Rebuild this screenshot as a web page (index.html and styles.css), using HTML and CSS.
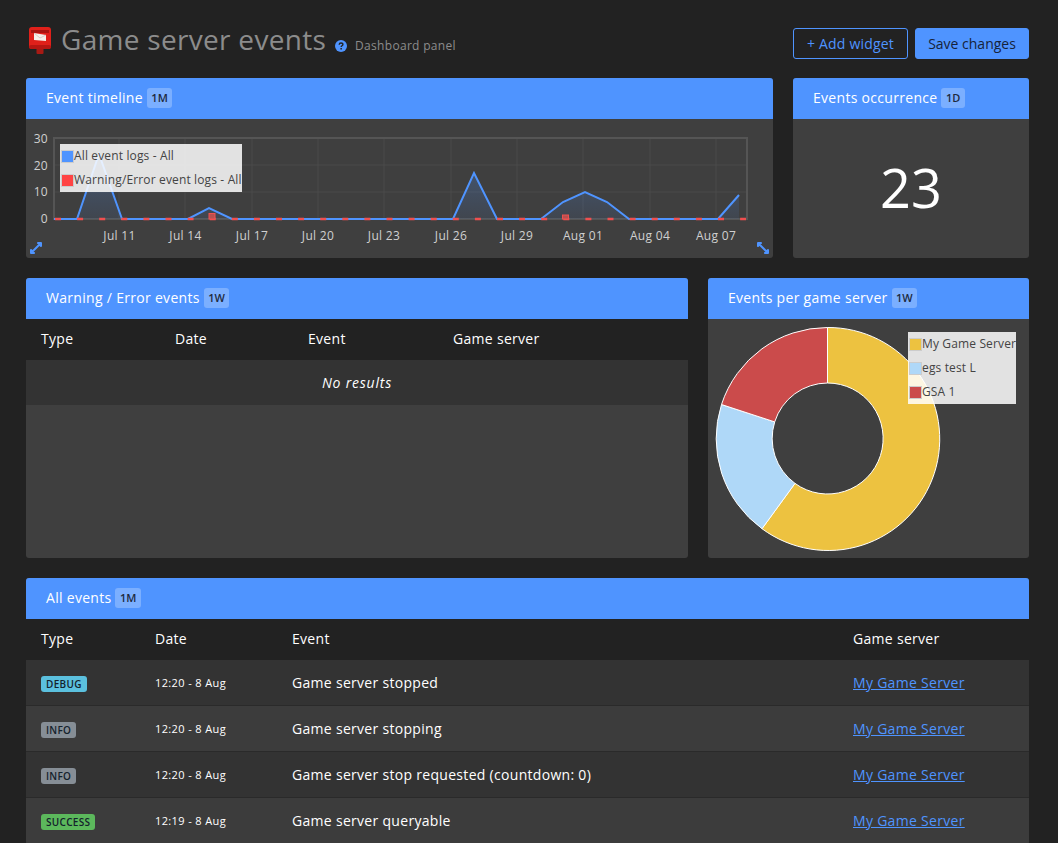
FILE: index.html
```html
<!DOCTYPE html>
<html lang="en">
<head>
    <meta charset="UTF-8">
    <meta name="viewport" content="width=device-width, initial-scale=1.0">
    <title>Game server events</title>
    <link rel="stylesheet" href="styles.css">
</head>
<body>

<div class="page-head">
    <svg class="logo" viewBox="0 0 24 27" width="24" height="27">
        <rect x="8.5" y="21" width="7" height="6" rx="1" fill="#a81a14"/>
        <rect x="1" y="0" width="22" height="22" rx="3" fill="#e0201a"/>
        <rect x="3" y="3" width="18" height="3" fill="#a91510"/>
        <path d="M6 6 L18 8 L18 14 L6 13 Z" fill="#f6f0ea"/>
        <path d="M6 6 L12 11 L18 8" fill="none" stroke="#c9bdb6" stroke-width="0.7"/>
        <rect x="1" y="18" width="22" height="4" rx="2" fill="#b81612"/>
    </svg>
    <h1>Game server events</h1>
    <svg class="help" viewBox="0 0 12 12" width="12" height="12">
        <circle cx="6" cy="6" r="6" fill="#4f94ff"/>
        <path d="M4.2 4.7 C4.2 3.6 5 3 6 3 C7 3 7.9 3.6 7.9 4.6 C7.9 5.8 6.2 5.8 6.2 7" fill="none" stroke="#222" stroke-width="1.4"/>
        <rect x="5.4" y="8" width="1.5" height="1.5" fill="#222"/>
    </svg>
    <span class="subtitle">Dashboard panel</span>
    <div class="actions">
        <button class="btn btn-outline" type="button">+ Add widget</button>
        <button class="btn btn-solid" type="button">Save changes</button>
    </div>
</div>

<div class="row row-top">
    <div class="widget timeline">
        <div class="widget-head">Event timeline <span class="range">1M</span></div>
        <div class="widget-body chart-body">
            <svg class="chart" viewBox="0 0 747 139" width="747" height="139">
                <g class="grid">
                    <path d="M93 19V100M159 19V100M226 19V100M292 19V100M358 19V100M425 19V100M491 19V100M557 19V100M624 19V100M690 19V100"/>
                    <path d="M28 46H721M28 73H721"/>
                </g>
                <rect class="plot" x="28" y="19" width="693" height="81"/>
                <g class="tick">
                    <text x="22" y="24" text-anchor="end">30</text>
                    <text x="22" y="51" text-anchor="end">20</text>
                    <text x="22" y="77" text-anchor="end">10</text>
                    <text x="22" y="104" text-anchor="end">0</text>
                    <text x="93.5" y="121" text-anchor="middle">Jul 11</text>
                    <text x="159.5" y="121" text-anchor="middle">Jul 14</text>
                    <text x="226" y="121" text-anchor="middle">Jul 17</text>
                    <text x="292" y="121" text-anchor="middle">Jul 20</text>
                    <text x="358" y="121" text-anchor="middle">Jul 23</text>
                    <text x="425" y="121" text-anchor="middle">Jul 26</text>
                    <text x="491" y="121" text-anchor="middle">Jul 29</text>
                    <text x="557" y="121" text-anchor="middle">Aug 01</text>
                    <text x="624" y="121" text-anchor="middle">Aug 04</text>
                    <text x="690" y="121" text-anchor="middle">Aug 07</text>
                </g>
                <defs>
                    <linearGradient id="fillBlue" x1="0" y1="0" x2="0" y2="1">
                        <stop offset="0" stop-color="#4f94ff" stop-opacity="0.3"/>
                        <stop offset="1" stop-color="#4f94ff" stop-opacity="0.08"/>
                    </linearGradient>
                </defs>
                <path fill="url(#fillBlue)" d="M51 100L73 35L96 100ZM162 100L183 89L206 100ZM427 100L448 54L471 100ZM515 100L537 83L559 73L581 83L603 100ZM692 100L713 76V100Z"/>
                <polyline class="line" points="28,100 51,100 73,35 96,100 162,100 183,89 206,100 427,100 448,54 471,100 515,100 537,83 559,73 581,83 603,100 692,100 713,76"/>
                <line class="bars" x1="29" y1="100" x2="720" y2="100"/>
                <rect class="bar" x="183" y="94.5" width="6" height="5.5"/>
                <rect class="bar" x="536.5" y="96" width="6" height="4"/>
            </svg>
            <table class="legend legend-line">
                <tr><td><span class="swatch sw-blue"></span></td><td>All event logs - All</td></tr>
                <tr><td><span class="swatch sw-red"></span></td><td>Warning/Error event logs - All</td></tr>
            </table>
            <svg class="resize resize-left" viewBox="0 0 12 12" width="12" height="12">
                <path class="resize-mark" d="M2.5 9.5L9.5 2.5M1 11V8L4 11ZM11 1V4L8 1Z"/>
            </svg>
            <svg class="resize resize-right" viewBox="0 0 12 12" width="12" height="12">
                <path class="resize-mark" d="M2.5 2.5L9.5 9.5M1 1H4L1 4ZM11 11V8L8 11Z"/>
            </svg>
        </div>
    </div>
    <div class="widget occurrence">
        <div class="widget-head">Events occurrence <span class="range">1D</span></div>
        <div class="widget-body count">23</div>
    </div>
</div>

<div class="row row-mid">
    <div class="widget warnings">
        <div class="widget-head">Warning / Error events <span class="range">1W</span></div>
        <div class="widget-body">
            <table class="data data-warn">
                <thead>
                    <tr><th>Type</th><th>Date</th><th>Event</th><th>Game server</th></tr>
                </thead>
                <tbody>
                    <tr><td class="empty" colspan="4">No results</td></tr>
                </tbody>
            </table>
        </div>
    </div>
    <div class="widget servers">
        <div class="widget-head">Events per game server <span class="range">1W</span></div>
        <div class="widget-body chart-body">
            <svg class="donut" viewBox="0 0 321 239" width="321" height="239">
                <g stroke="#fff" stroke-width="1">
                    <path fill="#edc240" d="M119.5 8.5A111.5 111.5 0 1 1 54 209.7L87 164.4A55.5 55.5 0 1 0 119.5 64Z"/>
                    <path fill="#afd8f8" d="M54 209.7A111.5 111.5 0 0 1 13.5 85.5L66.7 102.9A55.5 55.5 0 0 0 87 164.4Z"/>
                    <path fill="#cb4b4b" d="M13.5 85.5A111.5 111.5 0 0 1 119.5 8.5V64A55.5 55.5 0 0 0 66.7 102.9Z"/>
                </g>
            </svg>
            <table class="legend legend-pie">
                <tr><td><span class="swatch sw-yellow"></span></td><td>My Game Server</td></tr>
                <tr><td><span class="swatch sw-light"></span></td><td>egs test L</td></tr>
                <tr><td><span class="swatch sw-dred"></span></td><td>GSA 1</td></tr>
            </table>
        </div>
    </div>
</div>

<div class="widget all-events">
    <div class="widget-head">All events <span class="range">1M</span></div>
    <table class="data data-all">
        <thead>
            <tr><th>Type</th><th>Date</th><th>Event</th><th>Game server</th></tr>
        </thead>
        <tbody>
            <tr>
                <td><span class="tag tag-debug">DEBUG</span></td>
                <td class="date">12:20 - 8 Aug</td>
                <td>Game server stopped</td>
                <td><a href="#">My Game Server</a></td>
            </tr>
            <tr>
                <td><span class="tag tag-info">INFO</span></td>
                <td class="date">12:20 - 8 Aug</td>
                <td>Game server stopping</td>
                <td><a href="#">My Game Server</a></td>
            </tr>
            <tr>
                <td><span class="tag tag-info">INFO</span></td>
                <td class="date">12:20 - 8 Aug</td>
                <td>Game server stop requested (countdown: 0)</td>
                <td><a href="#">My Game Server</a></td>
            </tr>
            <tr>
                <td><span class="tag tag-success">SUCCESS</span></td>
                <td class="date">12:19 - 8 Aug</td>
                <td>Game server queryable</td>
                <td><a href="#">My Game Server</a></td>
            </tr>
        </tbody>
    </table>
</div>

</body>
</html>
```

FILE: styles.css
```css
html, body {
    height: 843px;
    overflow: hidden;
}
body {
    margin: 0;
    padding: 0 29px 0 26px;
    background-color: #222;
    color: #fff;
    font-family: "Open Sans", sans-serif;
    font-size: 14px;
    letter-spacing: 0.3px;
}
.page-head {
    display: flex;
    align-items: center;
    height: 78px;
}
.logo {
    margin: 2px 9px 0 2px;
    flex: none;
}
h1 {
    margin: 0;
    font-size: 28px;
    font-weight: 400;
    color: #8c8c8c;
}
.help {
    margin: 13px 8px 0 9px;
}
.subtitle {
    margin-top: 12px;
    font-size: 12px;
    color: #8c8c8c;
}
.actions {
    margin-left: auto;
    display: flex;
    gap: 7px;
    margin-top: 8px;
}
.btn {
    height: 31px;
    padding: 0;
    border-radius: 3px;
    font-family: inherit;
    font-size: 14px;
    letter-spacing: 0;
    border: 1px solid #4f94ff;
}
.btn-outline {
    width: 115px;
    background-color: transparent;
    color: #4f94ff;
    letter-spacing: 0.2px;
}
.btn-solid {
    width: 114px;
    background-color: #4f94ff;
    color: #16233a;
}
.row {
    display: flex;
    gap: 20px;
    margin-bottom: 20px;
}
.row-top {
    height: 180px;
}
.row-mid {
    height: 280px;
}
.timeline {
    width: 747px;
}
.occurrence {
    flex: 1;
}
.warnings {
    width: 662px;
}
.servers {
    flex: 1;
}
.widget {
    display: flex;
    flex-direction: column;
    background-color: #3f3f3f;
    border-radius: 3px;
    overflow: hidden;
}
.widget-head {
    flex: none;
    height: 41px;
    padding-left: 20px;
    line-height: 40px;
    background-color: #4f94ff;
    color: #fff;
    font-size: 14px;
}
.range {
    display: inline-block;
    padding: 0 4.5px;
    line-height: 20px;
    border-radius: 3px;
    background-color: rgba(255, 255, 255, 0.25);
    color: #1e2a3d;
    font-size: 11px;
    font-weight: 600;
    letter-spacing: 0;
    vertical-align: 1px;
}
.widget-body {
    flex: 1;
    min-height: 0;
}
.chart-body {
    position: relative;
}
.chart, .donut {
    display: block;
}
.plot {
    fill: none;
    stroke: #555;
    stroke-width: 2;
}
.grid path {
    fill: none;
    stroke: #4a4a4a;
    stroke-width: 1;
}
.tick text {
    font-size: 12px;
    fill: #d0d0d0;
}
.line {
    fill: none;
    stroke: #4f94ff;
    stroke-width: 2;
}
.bars {
    stroke: #f04f4f;
    stroke-width: 2.5;
    stroke-dasharray: 6 16.1;
}
.bar {
    fill: #b9504f;
    stroke: #f05050;
}
.legend {
    position: absolute;
    background-color: rgba(255, 255, 255, 0.85);
    border-collapse: collapse;
    color: #444;
    font-size: 12px;
    letter-spacing: 0.14px;
}
.legend td {
    padding: 0 0 0.5px;
    height: 23.5px;
    white-space: nowrap;
}
.legend-line {
    left: 34px;
    top: 25px;
    width: 182px;
}
.legend-pie {
    left: 200px;
    top: 13px;
    width: 108px;
}
.swatch {
    display: block;
    width: 11px;
    height: 11px;
    margin: 1px 0 0 1px;
    border: 1px solid #ccc;
}
.sw-blue { background-color: #4f94ff; }
.sw-red { background-color: #f44; }
.sw-yellow { background-color: #edc240; }
.sw-light { background-color: #afd8f8; }
.sw-dred { background-color: #cb4b4b; }
.resize {
    position: absolute;
    bottom: 4px;
}
.resize-mark {
    fill: #4f94ff;
    stroke: #4f94ff;
    stroke-width: 2;
    stroke-linejoin: round;
}
.resize-left {
    left: 4px;
}
.resize-right {
    right: 4px;
}
.count {
    display: flex;
    align-items: center;
    justify-content: center;
    font-size: 54px;
    letter-spacing: 0;
    padding-bottom: 4px;
}
.data {
    width: 100%;
    border-collapse: collapse;
    table-layout: fixed;
}
.data th {
    height: 39px;
    padding: 0 0 2px 15px;
    background-color: #222;
    text-align: left;
    font-weight: 400;
    font-size: 14px;
}
.data td {
    height: 45px;
    padding: 0 0 0 15px;
    border-bottom: 1px solid #2a2a2a;
    font-size: 14px;
}
.data tbody tr:nth-child(odd) {
    background-color: #333;
}
.data tbody tr:nth-child(even) {
    background-color: #3c3c3c;
}
.data-warn th:nth-child(1) { width: 119px; }
.data-warn th:nth-child(2) { width: 118px; }
.data-warn th:nth-child(3) { width: 130px; }
.data .empty {
    padding-left: 0;
    text-align: center;
    font-style: italic;
    letter-spacing: 0.8px;
    border-bottom: 0;
}
.data-all th:nth-child(1) { width: 99px; }
.data-all th:nth-child(2) { width: 122px; }
.data-all th:nth-child(3) { width: 546px; }
.data .date {
    font-size: 11px;
    letter-spacing: 0.38px;
}
.tag {
    display: inline-block;
    padding: 0 5px;
    line-height: 16px;
    border-radius: 3px;
    font-size: 10px;
    font-weight: 600;
    color: #14222c;
    vertical-align: middle;
}
.tag-debug { background-color: #5bc0de; }
.tag-info { background-color: #868e96; }
.tag-success { background-color: #5cb85c; }
a {
    color: #4f94ff;
}
```
